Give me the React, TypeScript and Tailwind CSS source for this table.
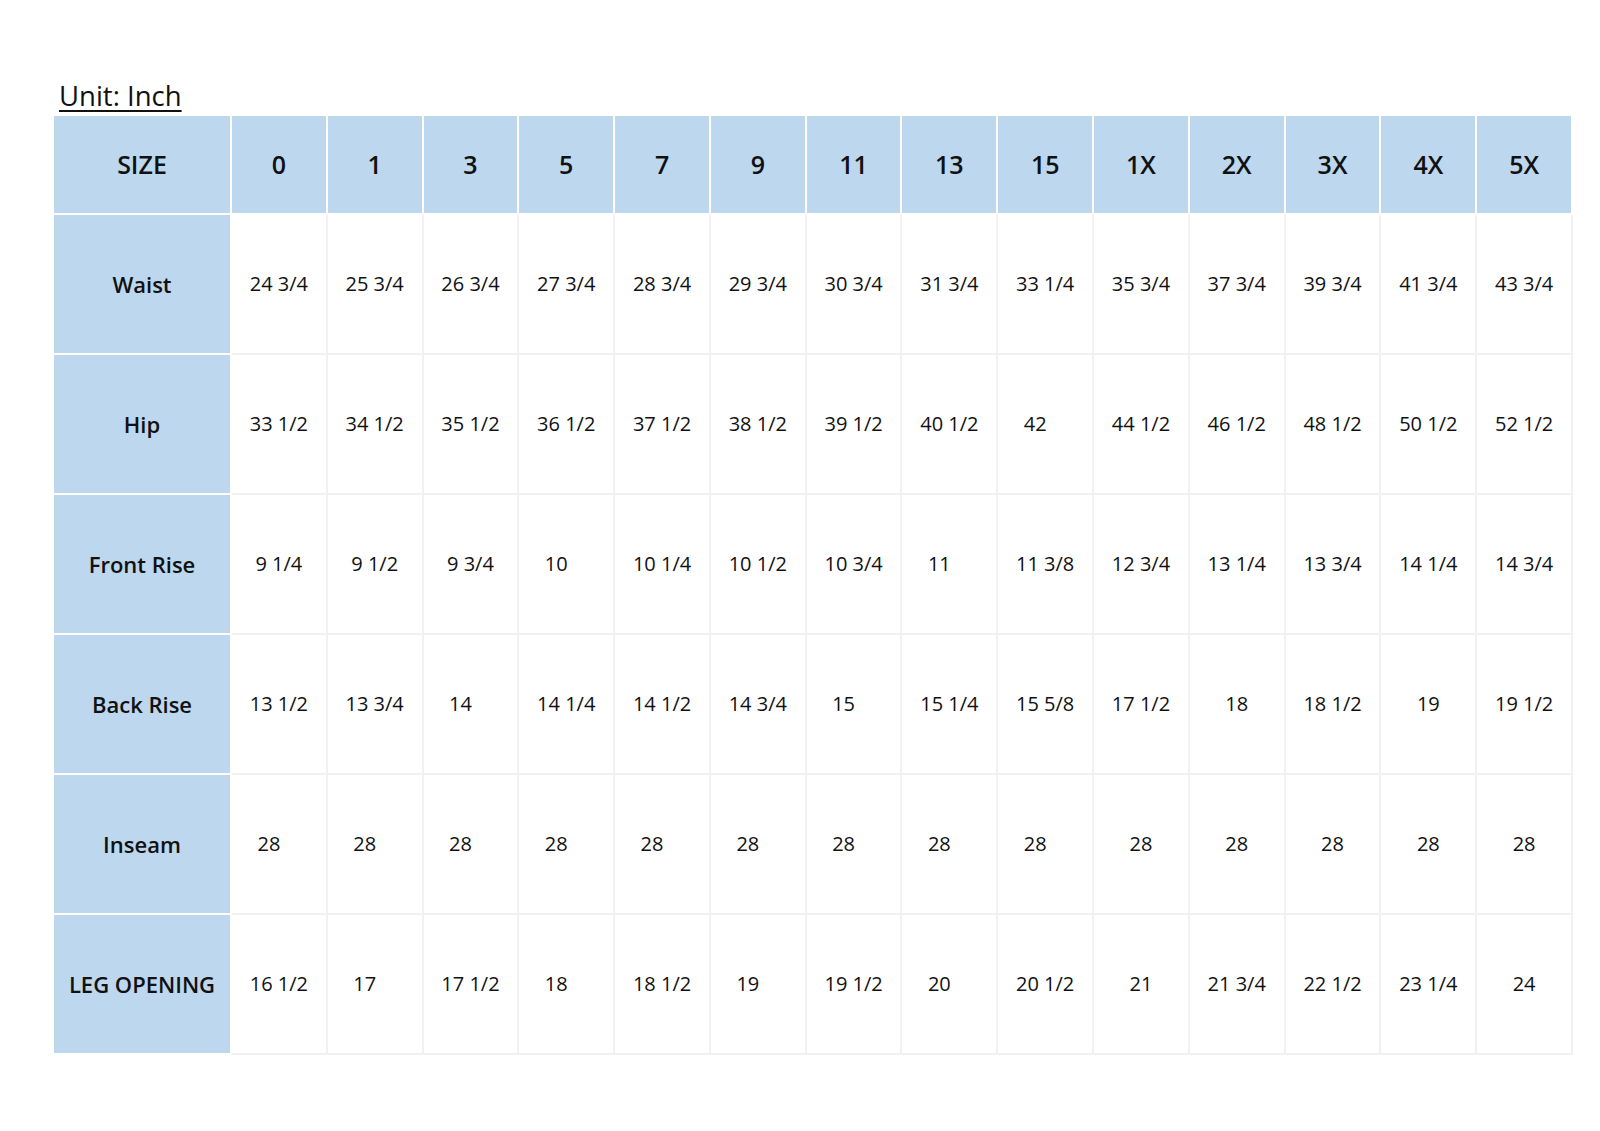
const sizes = ['0', '1', '3', '5', '7', '9', '11', '13', '15', '1X', '2X', '3X', '4X', '5X'];

const rows: { label: string; values: string[] }[] = [
  { label: 'Waist', values: ['24 3/4', '25 3/4', '26 3/4', '27 3/4', '28 3/4', '29 3/4', '30 3/4', '31 3/4', '33 1/4', '35 3/4', '37 3/4', '39 3/4', '41 3/4', '43 3/4'] },
  { label: 'Hip', values: ['33 1/2', '34 1/2', '35 1/2', '36 1/2', '37 1/2', '38 1/2', '39 1/2', '40 1/2', '42', '44 1/2', '46 1/2', '48 1/2', '50 1/2', '52 1/2'] },
  { label: 'Front Rise', values: ['9 1/4', '9 1/2', '9 3/4', '10', '10 1/4', '10 1/2', '10 3/4', '11', '11 3/8', '12 3/4', '13 1/4', '13 3/4', '14 1/4', '14 3/4'] },
  { label: 'Back Rise', values: ['13 1/2', '13 3/4', '14', '14 1/4', '14 1/2', '14 3/4', '15', '15 1/4', '15 5/8', '17 1/2', '18', '18 1/2', '19', '19 1/2'] },
  { label: 'Inseam', values: ['28', '28', '28', '28', '28', '28', '28', '28', '28', '28', '28', '28', '28', '28'] },
  { label: 'LEG OPENING', values: ['16 1/2', '17', '17 1/2', '18', '18 1/2', '19', '19 1/2', '20', '20 1/2', '21', '21 3/4', '22 1/2', '23 1/4', '24'] },
];

function shifted(value: string, col: number) {
  return col < 9 && !value.includes('/');
}

export default function App() {
  return (
    <div className="min-h-[1131px] w-[1600px] bg-white text-[#111]" style={{ fontFamily: '"Open Sans", "Noto Sans", sans-serif' }}>
      <div className="pl-[54px] pt-[78px]">
        <div className="mb-[2px] h-[36px] pl-[5px] text-[27.5px] leading-[36px] underline decoration-[2px] underline-offset-[4px]">
          Unit: Inch
        </div>

        <div className="grid w-[1519px] grid-cols-[178px_repeat(14,1fr)]">
          <div className="flex h-[99px] items-center justify-center border-r-2 border-b-2 border-white bg-[#bdd7ee] text-[25px] font-semibold">
            SIZE
          </div>
          {sizes.map((s) => (
            <div key={s} className="flex h-[99px] items-center justify-center border-r-2 border-b-2 border-white bg-[#bdd7ee] text-[25px] font-semibold">
              {s}
            </div>
          ))}

          {rows.map((row) => (
            <div key={row.label} className="contents">
              <div className="flex h-[140px] items-center justify-center border-r-2 border-b-2 border-white bg-[#bdd7ee] text-[22px] font-semibold">
                {row.label}
              </div>
              {row.values.map((v, i) => (
                <div
                  key={i}
                  className={
                    'flex h-[140px] items-center justify-center border-r-2 border-b-2 border-[#f1f1f1] bg-white text-[20px] ' +
                    (shifted(v, i) ? 'pr-[20px]' : '')
                  }
                >
                  {v}
                </div>
              ))}
            </div>
          ))}
        </div>
      </div>
    </div>
  );
}
